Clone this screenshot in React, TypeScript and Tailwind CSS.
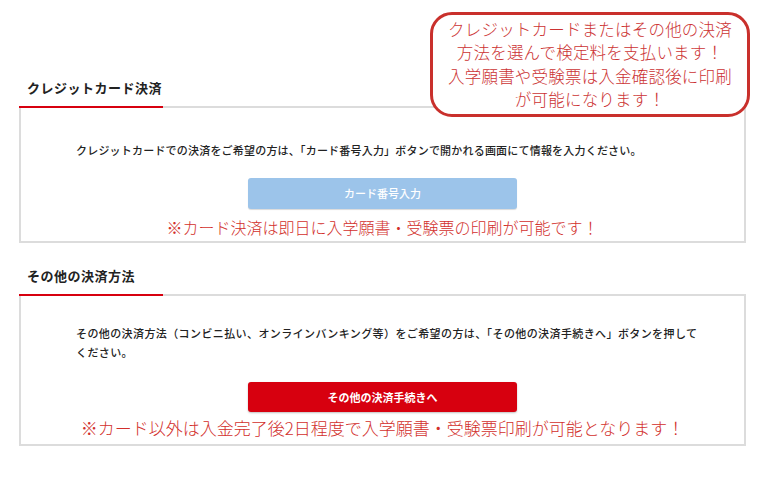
import React from "react";

const jp = { fontFamily: '"Noto Sans CJK JP", "Noto Sans", sans-serif' };

function SectionHead({ title }: { title: string }) {
  return (
    <div>
      <div className="pl-2 pb-2 text-[13px] leading-[20px] font-bold text-[#222] tracking-[0.5px]">{title}</div>
      <div className="flex h-[2px]">
        <div className="w-[144px] bg-[#d7000f]" />
        <div className="flex-1 bg-[#dcdcdc]" />
      </div>
    </div>
  );
}

export default function App() {
  return (
    <div className="relative w-[770px] h-[500px] bg-white overflow-hidden" style={jp}>
      <div className="ml-[19px] mr-[24px] pt-[78px]">
        <SectionHead title="クレジットカード決済" />
        <div className="border-x-2 border-b-2 border-[#dcdcdc] pt-[34px] pb-[3px]">
          <p className="pl-[55px] text-[11px] leading-[16px] font-medium text-[#222] tracking-[0.2px]">
            クレジットカードでの決済をご希望の方は、「カード番号入力」ボタンで開かれる画面にて情報を入力ください。
          </p>
          <div className="flex justify-center mt-[20px]">
            <button className="w-[269px] h-[31px] rounded-[3px] bg-[#9cc4ea] text-white text-[11px] font-medium shadow-[0_1px_1px_rgba(0,0,0,0.15)]">
              カード番号入力
            </button>
          </div>
          <p className="mt-[7px] text-center text-[16px] leading-[22px] font-light text-[#d2302c]">
            ※カード決済は即日に入学願書・受験票の印刷が可能です！
          </p>
        </div>

        <div className="mt-[23px]">
          <SectionHead title="その他の決済方法" />
        </div>
        <div className="border-x-2 border-b-2 border-[#dcdcdc] pt-[28px] pb-[5px]">
          <p className="pl-[55px] pr-[36px] text-[11px] leading-[19px] font-medium text-[#222] tracking-[0.4px]">
            その他の決済方法（コンビニ払い、オンラインバンキング等）をご希望の方は、「その他の決済手続きへ」ボタンを押してください。
          </p>
          <div className="flex justify-center mt-[20px]">
            <button className="w-[269px] h-[30px] rounded-[3px] bg-[#d7000f] text-white text-[11px] font-bold shadow-[0_1px_2px_rgba(0,0,0,0.25)]">
              その他の決済手続きへ
            </button>
          </div>
          <p className="mt-[5px] text-center text-[17px] leading-[22px] font-light text-[#d2302c]">
            ※カード以外は入金完了後2日程度で入学願書・受験票印刷が可能となります！
          </p>
        </div>
      </div>

      <div className="absolute left-[430px] top-[12px] w-[320px] h-[105px] rounded-[22px] border-[3px] border-[#c9302c] bg-white flex items-center justify-center">
        <p className="text-center text-[16.5px] leading-[23.5px] font-light text-[#cc3333] tracking-[0.2px]">
          クレジットカードまたはその他の決済<br />
          方法を選んで検定料を支払います！<br />
          入学願書や受験票は入金確認後に印刷<br />
          が可能になります！
        </p>
      </div>
    </div>
  );
}
